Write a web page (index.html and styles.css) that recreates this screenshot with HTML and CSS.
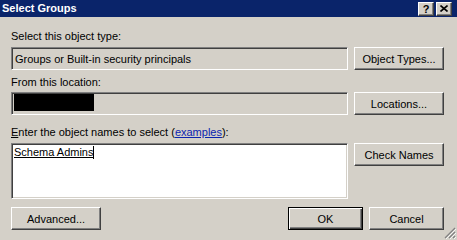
FILE: index.html
```html
<!DOCTYPE html>
<html lang="en">
<head>
    <meta charset="UTF-8">
    <title>Select Groups</title>
    <link rel="stylesheet" href="styles.css">
</head>
<body>
    <div class="dialog">
        <div class="titlebar">
            <span class="title">Select Groups</span>
            <div class="caption-buttons">
                <span class="cap-btn help">?</span>
                <span class="cap-btn close">
                    <svg width="8" height="7" viewBox="0 0 8 7">
                        <path d="M0.5 0.5 L7.5 6.5 M7.5 0.5 L0.5 6.5" stroke="#000" stroke-width="1.6" fill="none"/>
                    </svg>
                </span>
            </div>
        </div>

        <div class="content">
            <div class="section first">
                <div class="label">Select this object type:</div>
                <div class="row">
                    <div class="field readonly">Groups or Built-in security principals</div>
                    <button class="btn">Object Types...</button>
                </div>
            </div>

            <div class="section second">
                <div class="label">From this location:</div>
                <div class="row">
                    <div class="field readonly location"><span class="redacted"></span></div>
                    <button class="btn">Locations...</button>
                </div>
            </div>

            <div class="section third">
                <div class="label"><u>E</u>nter the object names to select (<a href="#" class="link">examples</a>):</div>
                <div class="row names-row">
                    <div class="field names"><span class="resolved">Schema Admins</span><span class="caret"></span></div>
                    <button class="btn">Check Names</button>
                </div>
            </div>

            <div class="footer">
                <button class="btn">Advanced...</button>
                <div class="footer-right">
                    <button class="btn small default">OK</button>
                    <button class="btn small">Cancel</button>
                </div>
            </div>
        </div>

        <svg class="grip" width="12" height="12" viewBox="0 0 12 12">
            <path d="M11 1 L1 11 M11 5 L5 11 M11 9 L9 11" stroke="#808080" stroke-width="1.2"/>
            <path d="M12 2 L2 12 M12 6 L6 12 M12 10 L10 12" stroke="#fff" stroke-width="0.8"/>
        </svg>
    </div>
</body>
</html>
```

FILE: styles.css
```css
body {
    margin: 0;
    font-family: "Liberation Sans", Arial, sans-serif;
    font-size: 11px;
    background-color: #d4d0c8;
}
.dialog {
    position: relative;
    width: 457px;
    height: 240px;
    background: #d4d0c8;
    overflow: hidden;
}
.titlebar {
    height: 17px;
    background: #0a246a;
    display: flex;
    align-items: center;
    justify-content: space-between;
}
.title {
    color: #fff;
    font-weight: bold;
    font-size: 11px;
    padding-left: 2px;
    line-height: 17px;
}
.caption-buttons {
    display: flex;
    gap: 2px;
    padding-right: 5px;
}
.cap-btn {
    width: 14px;
    height: 12px;
    background: #d4d0c8;
    border: 1px solid;
    border-color: #fff #404040 #404040 #fff;
    box-shadow: inset -1px -1px #808080;
    display: flex;
    align-items: center;
    justify-content: center;
    font-weight: bold;
    font-size: 11px;
    line-height: 12px;
    color: #000;
}
.content {
    padding: 12px 13px 0 11px;
}
.label {
    line-height: 14px;
    height: 14px;
    color: #000;
    margin-bottom: 4px;
}
.second {
    margin-top: 5px;
}
.second .label {
    margin-bottom: 3px;
}
.third {
    margin-top: 10px;
}
.row {
    display: grid;
    grid-template-columns: 337px 90px;
    column-gap: 6px;
    align-items: start;
}
.field {
    box-sizing: border-box;
    height: 23px;
    border: 1px solid;
    border-color: #808080 #fff #fff #808080;
    box-shadow: inset 1px 1px #404040, inset -1px -1px #d4d0c8;
    display: flex;
    align-items: center;
    padding-left: 3px;
    color: #000;
}
.readonly {
    background: #d4d0c8;
}
.location {
    align-items: flex-start;
    padding: 1px 0 0 2px;
}
.redacted {
    display: block;
    width: 80px;
    height: 17px;
    background: #000;
}
.names {
    height: 56px;
    background: #fff;
    align-items: flex-start;
    padding: 1px 0 0 2px;
    line-height: 14px;
}
.resolved {
    text-decoration: underline;
}
.caret {
    display: inline-block;
    width: 1px;
    height: 13px;
    margin-top: 1px;
    background: #000;
}
.link {
    color: #0b24b0;
    text-decoration: underline;
}
.btn {
    box-sizing: border-box;
    width: 90px;
    height: 23px;
    padding: 0;
    background: #d4d0c8;
    border: 1px solid;
    border-color: #fff #404040 #404040 #fff;
    box-shadow: inset -1px -1px #808080;
    font-family: "Liberation Sans", Arial, sans-serif;
    font-size: 11px;
    color: #000;
    text-align: center;
}
.btn.small {
    width: 75px;
}
.btn.default {
    border: 1px solid #000;
    box-shadow: inset 1px 1px #fff, inset -1px -1px #404040, inset -2px -2px #808080;
}
.footer {
    margin-top: 8px;
    display: flex;
    justify-content: space-between;
}
.footer-right {
    display: flex;
    gap: 6px;
}
.grip {
    position: absolute;
    right: 1px;
    bottom: 1px;
}
```
